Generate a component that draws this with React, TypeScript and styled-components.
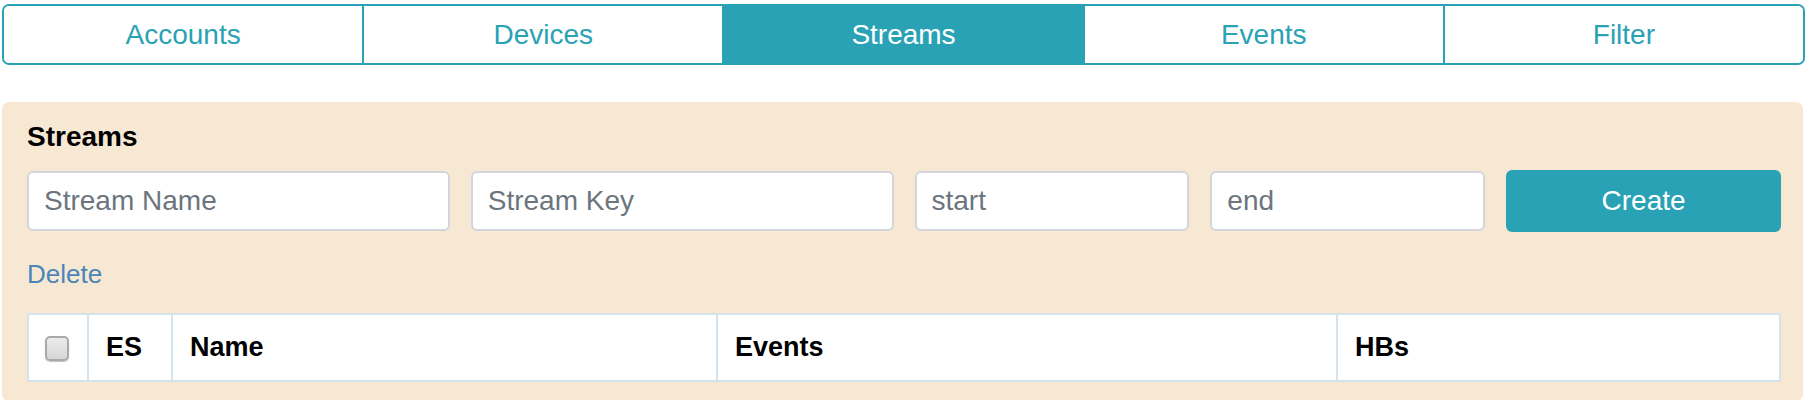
import React, { useState } from 'react';
import styled, { createGlobalStyle } from 'styled-components';

const GlobalStyle = createGlobalStyle`
  body {
    margin: 0;
    background: #fff;
    font-family: 'Liberation Sans', Arial, sans-serif;
  }
`;

const Page = styled.div`
  padding: 4px 1px 0 2px;
`;

const TabBar = styled.div`
  display: flex;
  height: 61px;
  border: 2px solid #29a2b5;
  border-radius: 7px;
  overflow: hidden;
  box-sizing: border-box;
`;

const Tab = styled.button<{ $active?: boolean }>`
  flex: 1;
  border: none;
  border-left: 2px solid #29a2b5;
  margin: 0;
  padding: 0;
  font-family: inherit;
  font-size: 28px;
  cursor: pointer;
  background: ${({ $active }) => ($active ? '#29a2b5' : '#fff')};
  color: ${({ $active }) => ($active ? '#fff' : '#29a2b5')};

  &:first-child {
    border-left: none;
  }
`;

const Panel = styled.section`
  margin: 37px 2px 0 0;
  padding: 18px 22px 19px 25px;
  background: #f7e8d3;
  border-radius: 7px;
`;

const Heading = styled.h2`
  margin: 0 0 16px;
  font-size: 28px;
  line-height: 34px;
  font-weight: bold;
  color: #000;
`;

const FormRow = styled.div`
  display: flex;
  align-items: center;
  margin: 0 -10.5px;
`;

const Col = styled.div<{ $span: number }>`
  flex: 0 0 ${({ $span }) => ($span / 12) * 100}%;
  padding: 0 10.5px;
  box-sizing: border-box;
`;

const TextInput = styled.input`
  display: block;
  width: 100%;
  height: 60px;
  box-sizing: border-box;
  padding: 0 15px;
  border: 2px solid #d2d6dc;
  border-radius: 6px;
  background: #fff;
  font-family: inherit;
  font-size: 28px;
  color: #333;

  &::placeholder {
    color: #6c757d;
  }
`;

const CreateButton = styled.button`
  display: block;
  width: 100%;
  height: 62px;
  border: none;
  border-radius: 6px;
  background: #29a2b5;
  color: #fff;
  font-family: inherit;
  font-size: 28px;
  cursor: pointer;
`;

const DeleteLink = styled.a`
  display: inline-block;
  margin-top: 26px;
  font-size: 26px;
  line-height: 32px;
  color: #4a86b9;
  cursor: pointer;
`;

const Table = styled.table`
  width: 100%;
  margin-top: 23px;
  border-collapse: collapse;
  background: #fff;
  table-layout: fixed;
`;

const HeadCell = styled.th<{ $width?: string }>`
  width: ${({ $width }) => $width || 'auto'};
  height: 67px;
  box-sizing: border-box;
  padding: 0 0 0 17px;
  border: 2px solid #d6e2ec;
  text-align: left;
  font-size: 27px;
  font-weight: bold;
  color: #000;
  vertical-align: middle;
`;

const CheckCell = styled(HeadCell)`
  padding: 0;
  text-align: center;
`;

const Check = styled.input.attrs({ type: 'checkbox' })`
  appearance: none;
  display: inline-block;
  vertical-align: middle;
  width: 24px;
  height: 25px;
  margin: 0 2px 0 0;
  border: 2px solid #a9a9a9;
  border-radius: 5px;
  box-sizing: border-box;
  background: linear-gradient(#ececec, #d6d6d6);
  box-shadow: 0 1px 1px rgba(0, 0, 0, 0.25);
  cursor: pointer;

  &:checked {
    background: #29a2b5;
    border-color: #1f8394;
  }
`;

const tabs = ['Accounts', 'Devices', 'Streams', 'Events', 'Filter'];

const App: React.FC = () => {
  const [active, setActive] = useState('Streams');

  return (
    <Page>
      <GlobalStyle />
      <TabBar>
        {tabs.map((t) => (
          <Tab key={t} $active={t === active} onClick={() => setActive(t)}>
            {t}
          </Tab>
        ))}
      </TabBar>

      <Panel>
        <Heading>Streams</Heading>
        <FormRow>
          <Col $span={3}>
            <TextInput placeholder="Stream Name" />
          </Col>
          <Col $span={3}>
            <TextInput placeholder="Stream Key" />
          </Col>
          <Col $span={2}>
            <TextInput placeholder="start" />
          </Col>
          <Col $span={2}>
            <TextInput placeholder="end" />
          </Col>
          <Col $span={2}>
            <CreateButton>Create</CreateButton>
          </Col>
        </FormRow>
        <DeleteLink>Delete</DeleteLink>
        <Table>
          <thead>
            <tr>
              <CheckCell $width="60px">
                <Check />
              </CheckCell>
              <HeadCell $width="84px">ES</HeadCell>
              <HeadCell $width="545px">Name</HeadCell>
              <HeadCell $width="620px">Events</HeadCell>
              <HeadCell>HBs</HeadCell>
            </tr>
          </thead>
        </Table>
      </Panel>
    </Page>
  );
};

export default App;
